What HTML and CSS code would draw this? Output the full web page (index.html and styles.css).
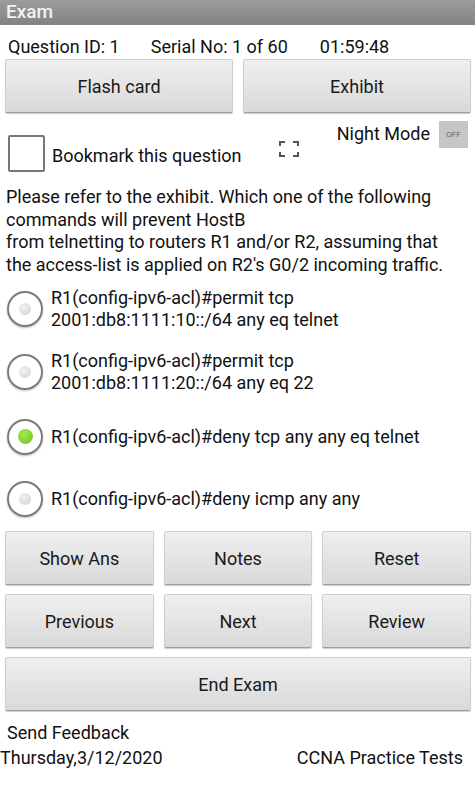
FILE: index.html
```html
<html>
<head>
  <link rel="stylesheet" href="styles.css">
</head>
<body>
  <div class="titlebar">Exam</div>

  <div class="info">
    <span class="qid">Question ID: 1</span>
    <span class="serial">Serial No: 1 of 60</span>
    <span class="timer">01:59:48</span>
  </div>

  <div class="row two">
    <div class="btn">Flash card</div>
    <div class="btn">Exhibit</div>
  </div>

  <div class="tools">
    <div class="bookmark">
      <span class="checkbox"></span>
      <span>Bookmark this question</span>
    </div>
    <svg class="expand" width="20" height="16" viewBox="0 0 20 16">
      <path d="M1 5V1h5M14 1h5v4M19 11v4h-5M6 15H1v-4" fill="none" stroke="#555" stroke-width="2"/>
    </svg>
    <div class="night">
      <span>Night Mode</span>
      <span class="toggle">OFF</span>
    </div>
  </div>

  <div class="question">Please refer to the exhibit. Which one of the following commands will prevent HostB<br>from telnetting to routers R1 and/or R2, assuming that<br>the access-list is applied on R2's G0/2 incoming traffic.</div>

  <div class="options">
    <div class="option">
      <span class="radio"><span class="dot"></span></span>
      <span class="label">R1(config-ipv6-acl)#permit tcp<br>2001:db8:1111:10::/64 any eq telnet</span>
    </div>
    <div class="option">
      <span class="radio"><span class="dot"></span></span>
      <span class="label">R1(config-ipv6-acl)#permit tcp<br>2001:db8:1111:20::/64 any eq 22</span>
    </div>
    <div class="option">
      <span class="radio"><span class="dot on"></span></span>
      <span class="label">R1(config-ipv6-acl)#deny tcp any any eq telnet</span>
    </div>
    <div class="option">
      <span class="radio"><span class="dot"></span></span>
      <span class="label">R1(config-ipv6-acl)#deny icmp any any</span>
    </div>
  </div>

  <div class="row three first">
    <div class="btn">Show Ans</div>
    <div class="btn">Notes</div>
    <div class="btn">Reset</div>
  </div>
  <div class="row three">
    <div class="btn">Previous</div>
    <div class="btn">Next</div>
    <div class="btn">Review</div>
  </div>
  <div class="row one">
    <div class="btn">End Exam</div>
  </div>

  <div class="feedback">Send Feedback</div>
  <div class="footer">
    <span>Thursday,3/12/2020</span>
    <span class="app">CCNA Practice Tests</span>
  </div>
</body>
</html>
```

FILE: styles.css
```css
body {
  margin: 0;
  width: 475px;
  background: #fff;
  color: #111;
  font-family: Roboto, "Noto Sans", sans-serif;
  font-size: 18px;
}
.titlebar {
  height: 25px;
  line-height: 23px;
  padding-left: 6px;
  color: #f2f2f2;
  font-size: 19px;
  font-weight: 500;
  background: linear-gradient(#9c9c9c, #828282);
}
.info {
  display: flex;
  height: 33px;
  align-items: flex-end;
  padding-left: 8px;
  line-height: 22px;
}
.serial {
  margin-left: 31px;
}
.timer {
  margin-left: 32px;
}
.row {
  display: flex;
  gap: 10px;
  padding: 0 4px 0 5px;
}
.row.two {
  margin-top: 1px;
}
.row.three {
  margin-top: 9px;
}
.row.three.first {
  margin-top: 4px;
}
.btn {
  flex: 1;
  height: 52px;
  display: flex;
  align-items: center;
  justify-content: center;
  border: 1px solid #cfcfcf;
  border-bottom-color: #9d9d9d;
  border-radius: 2px;
  background: linear-gradient(#efefef, #d9d9d9);
  box-shadow: 0 1px 1px rgba(0, 0, 0, 0.2);
  color: #1a1a1a;
}
.tools {
  display: flex;
  height: 72px;
  padding: 0 8px;
}
.bookmark {
  display: flex;
  align-items: center;
  margin-top: 22px;
  height: 37px;
}
.checkbox {
  width: 33px;
  height: 33px;
  border: 2px solid #777;
  border-radius: 2px;
  margin-right: 7px;
}
.bookmark span:last-child {
  margin-top: 4px;
}
.expand {
  margin: 28px 0 0 37px;
}
.night {
  display: flex;
  margin-left: auto;
  margin-top: 8px;
  height: 28px;
}
.night span:first-child {
  line-height: 26px;
  margin-right: 9px;
}
.toggle {
  width: 29px;
  height: 27px;
  background: #c6c6c6;
  color: #666;
  font-size: 8px;
  line-height: 27px;
  text-align: center;
  margin-right: -1px;
}
.question {
  padding: 1px 6px 0 6px;
  line-height: 22.5px;
  font-size: 18px;
}
.options {
  padding: 1px 0 0 7px;
}
.option {
  display: flex;
  align-items: center;
  min-height: 63px;
}
.option:nth-child(3) {
  min-height: 67px;
}
.option:nth-child(4) {
  min-height: 57px;
}
.radio {
  flex: none;
  width: 32px;
  height: 32px;
  border: 2px solid #7b7b7b;
  border-radius: 50%;
  box-shadow: 0 1px 2px rgba(0, 0, 0, 0.25);
  display: flex;
  align-items: center;
  justify-content: center;
  margin-right: 8px;
}
.dot {
  width: 12px;
  height: 12px;
  border-radius: 50%;
  background: radial-gradient(circle at 40% 35%, #f2f2f2, #cfcfcf);
}
.dot.on {
  width: 15px;
  height: 15px;
  background: radial-gradient(circle at 40% 35%, #a6ea4a, #66c21c);
}
.label {
  line-height: 22px;
}
.row.one {
  margin-top: 9px;
}
.feedback {
  margin-top: 10px;
  padding-left: 7px;
  line-height: 24px;
}
.footer {
  display: flex;
  line-height: 26px;
}
.app {
  margin-left: auto;
  margin-right: 12px;
}
```
